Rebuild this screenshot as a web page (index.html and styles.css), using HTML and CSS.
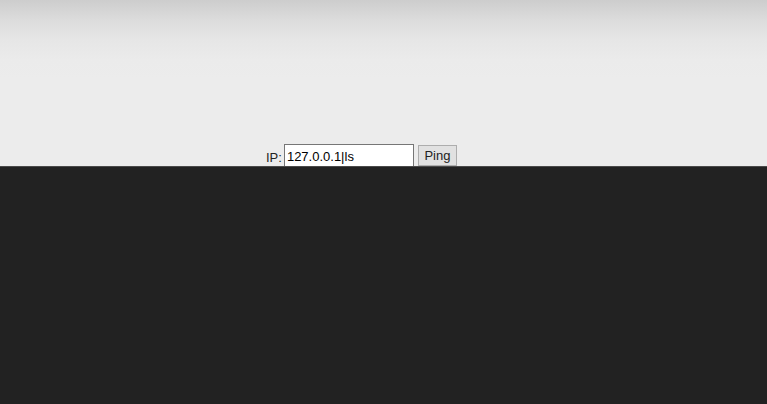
FILE: index.html
```html
<!DOCTYPE html>
<html>
<head>
<meta charset="utf-8">
<link rel="stylesheet" href="styles.css">
</head>
<body>
<div class="top">
  <form class="ping-form">
    <label class="lbl" for="ip">IP:</label>
    <input class="ip" id="ip" type="text" value="127.0.0.1|ls">
    <button class="btn" type="button">Ping</button>
  </form>
</div>
<div class="bottom"></div>
</body>
</html>
```
FILE: styles.css
```css
html, body {
  margin: 0;
  padding: 0;
  height: 100%;
}
body {
  font-family: "Liberation Sans", Arial, sans-serif;
  font-size: 13px;
  background: #222222;
  display: flex;
  flex-direction: column;
}
.top {
  height: 166px;
  background: linear-gradient(to bottom, #cdcdcd 0px, #dcdcdc 20px, #e6e6e6 40px, #ebebeb 60px, #ececec 80px, #ececec 100%);
  overflow: hidden;
  display: flex;
  align-items: flex-start;
  border-bottom: 1px solid #4a4a4a;
}
.ping-form {
  margin: 144px 0 0 266px;
  display: flex;
  align-items: flex-start;
  gap: 0;
}
.lbl {
  color: #222;
  margin-top: 6px;
  margin-right: 2px;
}
.ip {
  box-sizing: border-box;
  width: 130px;
  height: 24px;
  border: 1px solid #767676;
  padding: 1px 2px;
  font: 13px "Liberation Sans", Arial, sans-serif;
  color: #000;
  background: #fff;
  margin: 0;
  outline: none;
}
.btn {
  box-sizing: border-box;
  margin: 1px 0 0 4px;
  width: 39px;
  height: 21px;
  border: 1px solid #adadad;
  background: #e1e1e1;
  font: 13px "Liberation Sans", Arial, sans-serif;
  color: #222;
  padding: 0;
}
.bottom {
  flex: 1;
  background: #222222;
}
```
